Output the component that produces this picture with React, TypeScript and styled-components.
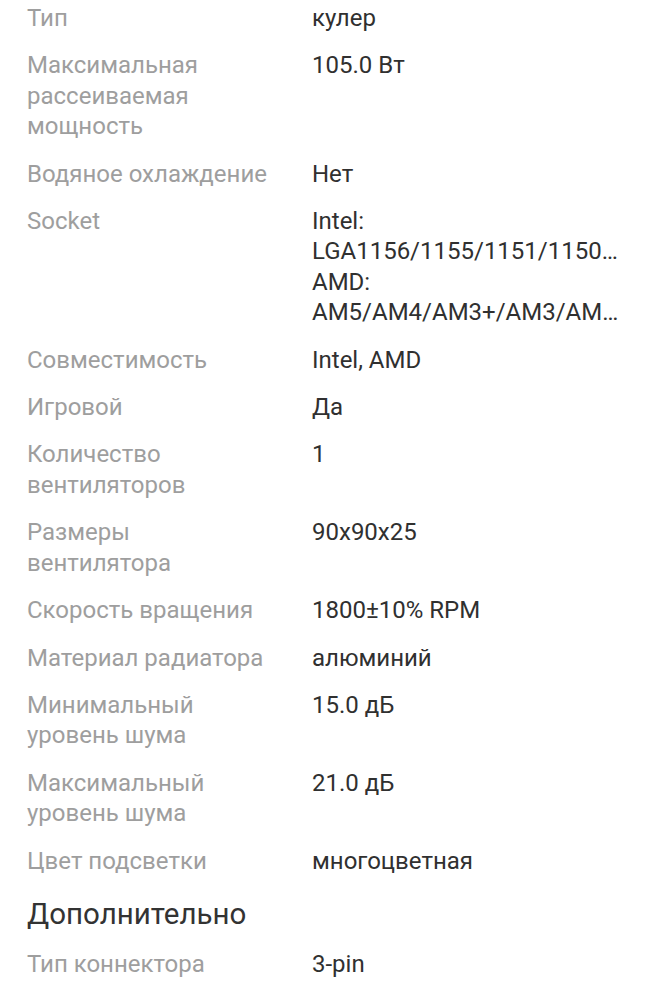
import React from "react";
import styled, { createGlobalStyle } from "styled-components";

const Global = createGlobalStyle`
  html, body { margin: 0; padding: 0; background: #ffffff; }
  body { font-family: Roboto, "Noto Sans", Arial, sans-serif; -webkit-font-smoothing: antialiased; }
`;

const Page = styled.div`
  width: 654px;
  min-height: 999px;
  box-sizing: border-box;
  padding: 3px 27px 0 27px;
  overflow: hidden;
`;

const List = styled.div`
  display: flex;
  flex-direction: column;
  gap: 17px;
`;

const Row = styled.div`
  display: grid;
  grid-template-columns: 285px 1fr;
  font-size: 24px;
  line-height: 30.4px;
`;

const Label = styled.div`
  color: #9e9e9e;
  max-width: 246px;
`;

const Value = styled.div`
  color: #303030;
  white-space: pre-line;
`;

const Heading = styled.h2`
  margin: 20px 0 17px;
  font-size: 29.5px;
  line-height: 36px;
  font-weight: 400;
  color: #333333;
`;

type Spec = { label: string; value: string };

const main: Spec[] = [
  { label: "Тип", value: "кулер" },
  { label: "Максимальная рассеиваемая мощность", value: "105.0 Вт" },
  { label: "Водяное охлаждение", value: "Нет" },
  {
    label: "Socket",
    value: "Intel:\nLGA1156/1155/1151/1150…\nAMD:\nAM5/AM4/AM3+/AM3/AM…",
  },
  { label: "Совместимость", value: "Intel, AMD" },
  { label: "Игровой", value: "Да" },
  { label: "Количество вентиляторов", value: "1" },
  { label: "Размеры вентилятора", value: "90x90x25" },
  { label: "Скорость вращения", value: "1800±10% RPM" },
  { label: "Материал радиатора", value: "алюминий" },
  { label: "Минимальный уровень шума", value: "15.0 дБ" },
  { label: "Максимальный уровень шума", value: "21.0 дБ" },
  { label: "Цвет подсветки", value: "многоцветная" },
];

const extra: Spec[] = [{ label: "Тип коннектора", value: "3-pin" }];

const SpecList = ({ items }: { items: Spec[] }) => (
  <List>
    {items.map((s) => (
      <Row key={s.label}>
        <Label>{s.label}</Label>
        <Value>{s.value}</Value>
      </Row>
    ))}
  </List>
);

export default function App() {
  return (
    <>
      <Global />
      <Page>
        <SpecList items={main} />
        <Heading>Дополнительно</Heading>
        <SpecList items={extra} />
      </Page>
    </>
  );
}
